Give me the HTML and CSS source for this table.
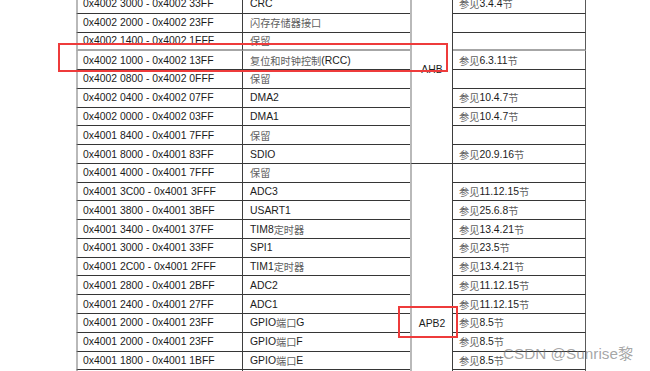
FILE: index.html
```html
<!DOCTYPE html>
<html lang="zh-CN">
<head>
<meta charset="utf-8">
<title>存储器映像</title>
<link rel="stylesheet" href="styles.css">
</head>
<body>
<div class="page">
  <div class="grid">
    <div class="bus ahb"><span class="bus-label">AHB</span></div>
    <div class="bus apb2"><span class="bus-label">APB2</span></div>

    <div class="c a">0x4002 3000 - 0x4002 33FF</div><div class="c n">CRC</div><div class="c r"><span class="cn">参见</span>3.4.4<span class="cn">节</span></div>
    <div class="c a">0x4002 2000 - 0x4002 23FF</div><div class="c n"><span class="cn">闪存存储器接口</span></div><div class="c r"></div>
    <div class="c a seam">0x4002 1400 - 0x4002 1FFF</div><div class="c n seam"><span class="cn">保留</span></div><div class="c r seam"></div>
    <div class="c a">0x4002 1000 - 0x4002 13FF</div><div class="c n"><span class="cn">复位和时钟控制</span>(RCC)</div><div class="c r"><span class="cn">参见</span>6.3.11<span class="cn">节</span></div>
    <div class="c a">0x4002 0800 - 0x4002 0FFF</div><div class="c n"><span class="cn">保留</span></div><div class="c r"></div>
    <div class="c a">0x4002 0400 - 0x4002 07FF</div><div class="c n">DMA2</div><div class="c r"><span class="cn">参见</span>10.4.7<span class="cn">节</span></div>
    <div class="c a">0x4002 0000 - 0x4002 03FF</div><div class="c n">DMA1</div><div class="c r"><span class="cn">参见</span>10.4.7<span class="cn">节</span></div>
    <div class="c a">0x4001 8400 - 0x4001 7FFF</div><div class="c n"><span class="cn">保留</span></div><div class="c r"></div>
    <div class="c a">0x4001 8000 - 0x4001 83FF</div><div class="c n">SDIO</div><div class="c r"><span class="cn">参见</span>20.9.16<span class="cn">节</span></div>
    <div class="c a">0x4001 4000 - 0x4001 7FFF</div><div class="c n"><span class="cn">保留</span></div><div class="c r"></div>
    <div class="c a">0x4001 3C00 - 0x4001 3FFF</div><div class="c n">ADC3</div><div class="c r"><span class="cn">参见</span>11.12.15<span class="cn">节</span></div>
    <div class="c a">0x4001 3800 - 0x4001 3BFF</div><div class="c n">USART1</div><div class="c r"><span class="cn">参见</span>25.6.8<span class="cn">节</span></div>
    <div class="c a">0x4001 3400 - 0x4001 37FF</div><div class="c n">TIM8<span class="cn">定时器</span></div><div class="c r"><span class="cn">参见</span>13.4.21<span class="cn">节</span></div>
    <div class="c a">0x4001 3000 - 0x4001 33FF</div><div class="c n">SPI1</div><div class="c r"><span class="cn">参见</span>23.5<span class="cn">节</span></div>
    <div class="c a">0x4001 2C00 - 0x4001 2FFF</div><div class="c n">TIM1<span class="cn">定时器</span></div><div class="c r"><span class="cn">参见</span>13.4.21<span class="cn">节</span></div>
    <div class="c a">0x4001 2800 - 0x4001 2BFF</div><div class="c n">ADC2</div><div class="c r"><span class="cn">参见</span>11.12.15<span class="cn">节</span></div>
    <div class="c a">0x4001 2400 - 0x4001 27FF</div><div class="c n">ADC1</div><div class="c r"><span class="cn">参见</span>11.12.15<span class="cn">节</span></div>
    <div class="c a">0x4001 2000 - 0x4001 23FF</div><div class="c n">GPIO<span class="cn">端口</span>G</div><div class="c r"><span class="cn">参见</span>8.5<span class="cn">节</span></div>
    <div class="c a">0x4001 2000 - 0x4001 23FF</div><div class="c n">GPIO<span class="cn">端口</span>F</div><div class="c r"><span class="cn">参见</span>8.5<span class="cn">节</span></div>
    <div class="c a">0x4001 1800 - 0x4001 1BFF</div><div class="c n">GPIO<span class="cn">端口</span>E</div><div class="c r"><span class="cn">参见</span>8.5<span class="cn">节</span></div>
    <div class="c a">0x4001 1400 - 0x4001 17FF</div><div class="c n">GPIO<span class="cn">端口</span>D</div><div class="c r"><span class="cn">参见</span>8.5<span class="cn">节</span></div>
  </div>

  <div class="mark mark-rcc"></div>
  <div class="mark mark-apb2"></div>
  <div class="watermark">CSDN @Sunrise黎</div>
</div>
</body>
</html>
```

FILE: styles.css
```css
html, body {
  margin: 0;
  padding: 0;
  background: #ffffff;
}

.page {
  position: relative;
  width: 650px;
  height: 371px;
  overflow: hidden;
  background: #ffffff;
  font-family: "Liberation Sans", Arial, "Noto Sans CJK SC", sans-serif;
  font-size: 10.4px;
  color: #1c1c1c;
}

.grid {
  display: grid;
  grid-template-columns: 167px 167px 43px 133px;
  grid-template-rows: repeat(21, 18.78px);
  margin-left: 76px;
  margin-top: -5px;
  width: 510px;
}

.c {
  box-sizing: border-box;
  display: flex;
  align-items: center;
  white-space: nowrap;
  border-bottom: 1px solid #363636;
  overflow: hidden;
}

.a {
  grid-column: 1;
  border-left: 2px solid #b9b9b9;
  border-right: 1px solid #3e3e3e;
  padding-left: 5px;
}

.n {
  grid-column: 2;
  padding-left: 7px;
}

.r {
  grid-column: 4;
  padding-left: 6px;
  border-right: 1px solid #5a5a5a;
}

.seam {
  border-bottom: 2px solid #a6a6a6;
}

.cn {
  font-family: "Noto Sans CJK SC", sans-serif;
  color: #5e5e5e;
  font-size: 10.2px;
}

.bus {
  box-sizing: border-box;
  grid-column: 3;
  border-left: 2px solid #b9b9b9;
  border-right: 1px solid #3e3e3e;
  text-align: center;
  line-height: 19px;
}

.ahb {
  grid-row: 1 / span 9;
  border-bottom: 1px solid #363636;
  padding-top: 65px;
}

.apb2 {
  grid-row: 10 / span 12;
  padding-top: 150px;
}

.bus-label {
  display: block;
  color: #1c1c1c;
}

.mark {
  position: absolute;
  box-sizing: border-box;
  border: 2px solid #ee3b3b;
}

.mark-rcc {
  left: 58px;
  top: 43px;
  width: 390px;
  height: 29px;
}

.mark-apb2 {
  left: 398px;
  top: 306px;
  width: 60px;
  height: 32px;
}

.watermark {
  position: absolute;
  left: 503px;
  top: 345px;
  font-family: "Liberation Sans", Arial, "Noto Sans CJK SC", sans-serif;
  font-size: 15.3px;
  line-height: 18px;
  color: rgba(110, 110, 110, 0.62);
  white-space: nowrap;
}
```
